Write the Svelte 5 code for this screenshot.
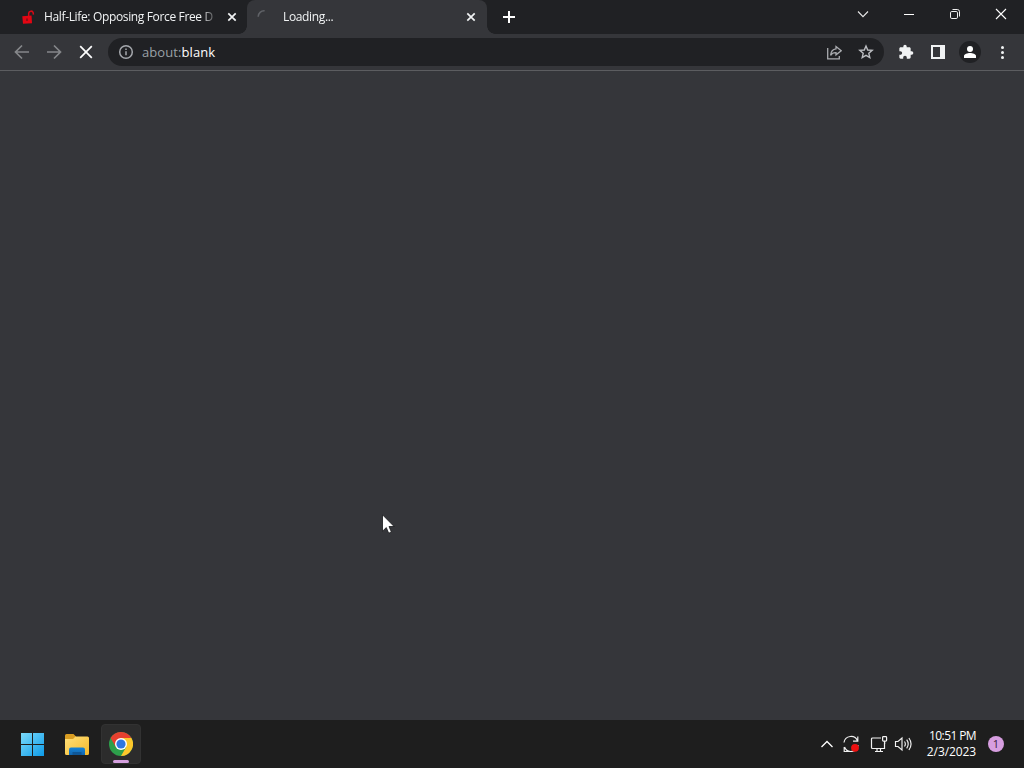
<script>
  let tabs = [
    {id: 1, title: "Half-Life: Opposing Force Free D", active: false},
    {id: 2, title: "Loading...", active: true}
  ];
  let time = "10:51 PM";
  let date = "2/3/2023";
  let notifications = 1;
</script>

<div class="screen">
  <div class="tabstrip">
    {#each tabs as tab}
      <div class="tab" class:active={tab.active}>
        {#if tab.active}
          <svg class="favicon" viewBox="0 0 16 16"><path d="M3.2 8.2A6 6 0 0 1 9.6 2.2" transform="translate(0 -.5)" fill="none" stroke="#606267" stroke-width="1.6"/></svg>
        {:else}
          <svg class="favicon" viewBox="0 0 16 16">
            <path d="M2.3 7.3 11.5 6.4 12 14.2 3 14.8z" fill="#e30613"/>
            <path d="M8.7 7V4.2a2.3 2.3 0 0 1 4.5-.4l.2 1.8" fill="none" stroke="#d50916" stroke-width="1.5"/>
            <path d="M7 9.4v2.7" stroke="#7c1018" stroke-width="1.5"/>
          </svg>
        {/if}
        <span class="title">{tab.title}</span>
        <svg class="close" viewBox="0 0 16 16"><path d="M4.3 4.3l7.4 7.4M11.7 4.3l-7.4 7.4" stroke="#f1f3f4" stroke-width="1.7"/></svg>
      </div>
    {/each}
    <svg class="plus" viewBox="0 0 16 16"><path d="M8 2v12M2 8h12" stroke="#fff" stroke-width="2"/></svg>
    <div class="window-buttons">
      <svg viewBox="0 0 16 16"><path d="M3 5.5 8 10.7 13 5.5" fill="none" stroke="#e8e8e8" stroke-width="1.1"/></svg>
      <svg viewBox="0 0 16 16"><path d="M3 8.5h10" stroke="#fff"/></svg>
      <svg viewBox="0 0 16 16" fill="none" stroke="#f0f0f0"><rect x="3.5" y="5.5" width="7" height="7" rx="1.3"/><path d="M5.5 3.5h4.8a2.2 2.2 0 0 1 2.2 2.2v4.8"/></svg>
      <svg viewBox="0 0 16 16"><path d="M3 3l10 10M13 3 3 13" stroke="#fff" stroke-width="1.1"/></svg>
    </div>
  </div>

  <div class="toolbar">
    <div class="nav">
      <svg viewBox="0 0 16 16" fill="none" stroke="#85878a" stroke-width="1.7"><path d="M15 8H2M8 1.5 1.5 8 8 14.5"/></svg>
      <svg viewBox="0 0 16 16" fill="none" stroke="#85878a" stroke-width="1.7"><path d="M1 8h13M8 1.5 14.5 8 8 14.5"/></svg>
      <svg viewBox="0 0 16 16" stroke="#fff" stroke-width="1.7"><path d="M2.2 2.2l11.6 11.6M13.8 2.2 2.2 13.8"/></svg>
    </div>
    <div class="omnibox">
      <svg viewBox="0 0 16 16" fill="none" stroke="#a5a8ad" stroke-width="1.5"><circle cx="8" cy="8" r="6.3"/><path d="M8 7.2v4M8 4.4v1.5"/></svg>
      <span class="url">about:<b>blank</b></span>
      <svg class="share" viewBox="0 0 16 16" fill="none" stroke="#a9abaf" stroke-width="1.3">
        <path d="M1.7 4v10.8h11.600V12"/>
        <path d="M10 2.600 15.200 6.700 10 10.800V8.600C7.200 8.500 5.700 9.400 4.600 11.300 4.900 7.500 6.900 5.200 10 4.900z"/>
      </svg>
      <svg viewBox="0 0 16 16" fill="none" stroke="#bcbec2" stroke-width="1.4"><path d="M8 2 9.7 6 14.2 6.4 10.8 9.3 11.8 13.6 8 11.3 4.2 13.6 5.2 9.3 1.8 6.4 6.3 6z"/></svg>
    </div>
    <div class="actions">
      <svg viewBox="0 0 24 24" fill="#f1f3f4"><path d="M20.5 11H19V7c0-1.1-.9-2-2-2h-4V3.500a2.500 2.500 0 0 0-5 0V5H4c-1.100 0-1.990.9-1.990 2v3.800H3.500c1.490 0 2.700 1.210 2.700 2.700s-1.210 2.700-2.700 2.700H2V20c0 1.100.9 2 2 2h3.800v-1.500c0-1.490 1.210-2.700 2.700-2.700s2.700 1.210 2.700 2.700V22H17c1.100 0 2-.9 2-2v-4h1.500a2.500 2.500 0 0 0 0-5z"/></svg>
      <svg viewBox="0 0 16 16"><path d="M1 1h14v14H1zM3 3v10h7V3z" fill="#f1f3f4" fill-rule="evenodd"/></svg>
      <span class="avatar"><svg viewBox="0 0 16 16" fill="#fff"><circle cx="8" cy="5" r="3"/><path d="M2 14v-2c0-2 3.500-3 6-3s6 1 6 3v2z"/></svg></span>
      <svg viewBox="0 0 16 16" fill="#f1f3f4"><circle cx="8.500" cy="3.500" r="1.500"/><circle cx="8.500" cy="8.500" r="1.500"/><circle cx="8.500" cy="13.500" r="1.500"/></svg>
    </div>
  </div>

  <div class="page"></div>

  <div class="taskbar">
    <div class="apps">
      <div class="app">
        <svg viewBox="0 0 24 24">
          <defs><linearGradient id="win" x1="0" y1="0" x2="24" y2="24" gradientUnits="userSpaceOnUse"><stop offset="0" stop-color="#7edcfb"/><stop offset="1" stop-color="#0a99e8"/></linearGradient></defs>
          <path d="M0 1h11v11H0zM12 1h11v11H12zM0 13h11v11H0zM12 13h11v11H12z" fill="url(#win)"/>
        </svg>
      </div>
      <div class="app">
        <svg class="folder" viewBox="0 0 26 24">
          <defs>
            <linearGradient id="fold" x1="0" y1="0" x2="1" y2="1"><stop offset="0" stop-color="#ffe07a"/><stop offset="1" stop-color="#f6b92b"/></linearGradient>
            <linearGradient id="tray" x1="0" y1="0" x2="0" y2="1"><stop offset="0" stop-color="#1583d8"/><stop offset="1" stop-color="#1266ae"/></linearGradient>
          </defs>
          <path d="M1 3.500A1.500 1.500 0 0 1 2.500 2h7L12 4.500v4H1z" fill="#d99d22"/>
          <path d="M1 7h8l2.500-2.500H23.500A1.500 1.500 0 0 1 25 6v15.500a1.500 1.500 0 0 1-1.500 1.500H2.500A1.500 1.500 0 0 1 1 21.500z" fill="url(#fold)"/>
          <path d="M5 23v-5.500a2 2 0 0 1 2-2h12a2 2 0 0 1 2 2V23z" fill="url(#tray)"/>
          <path d="M8.500 20h9v3h-9z" fill="#0f5797"/>
        </svg>
      </div>
      <div class="app current">
        <svg viewBox="0 0 24 24">
          <circle cx="12" cy="12" r="12" fill="#2d9f4b"/>
          <path d="M12 12 1.600 6A12 12 0 0 1 22.400 6z" fill="#e6402f"/>
          <path d="M12 6h10.400A12 12 0 0 1 12 24L17.200 15z" fill="#fcc72b"/>
          <path d="M1.600 6 6.800 15 12 12V6z" fill="#e6402f"/>
          <circle cx="12" cy="12" r="6" fill="#fff"/>
          <circle cx="12" cy="12" r="4.600" fill="#2f76e0"/>
        </svg>
        <span class="indicator"></span>
      </div>
    </div>
    <div class="tray">
      <svg class="up" viewBox="0 0 16 16"><path d="M2.500 11 8 5.500 13.500 11" fill="none" stroke="#fff" stroke-width="1.300"/></svg>
      <svg class="update" viewBox="0 0 18 18" fill="none" stroke="#eee" stroke-width="1.200">
        <path d="M2 7.500A7 7 0 0 1 15.500 6M15.800 1.500V6.200H11M16 10A7 7 0 0 1 2.500 12M6.500 16.500H2.200V12"/>
        <circle cx="13" cy="12.800" r="3.900" fill="#ee1010" stroke="none"/>
      </svg>
      <svg class="network" viewBox="0 0 18 18" fill="none" stroke="#f2f2f2" stroke-width="1.200">
        <path d="M11 3H2.500a1 1 0 0 0-1 1v8.500a1 1 0 0 0 1 1h12v-6M5 16.500h8M7 13.500v3M10.500 13.500v3"/>
        <rect x="12.600" y="1.600" width="4" height="4.500" rx=".8"/><path d="M14.600 6v3"/>
      </svg>
      <svg class="sound" viewBox="0 0 18 18" fill="none" stroke="#f2f2f2" stroke-width="1.150">
        <path d="M1.500 6.500H4L8 3v12l-4-3.500H1.500zM10.500 6.500q1.700 2.500 0 5M12.700 4.700q3 4.300 0 8.600M14.900 3q4.300 6 0 12"/>
      </svg>
      <div class="clock">
        <div class="time">{time}</div>
        <div class="date">{date}</div>
      </div>
      <span class="badge">{notifications}</span>
    </div>
  </div>

  <svg class="cursor" viewBox="0 0 13 20"><path d="M.5.8v16.400l3.800-3.600 2.400 5.600 2.700-1.200L7 12.500h5.100z" fill="#fff" stroke="#17181a" stroke-width=".8"/></svg>
</div>

<style>
  :global(body) {
    background: #35363a;
    overflow: hidden;
  }

  svg {
    display: block;
    flex: none;
    height: 16px;
    width: 16px;
  }

  .screen {
    background: #35363a;
    color: #fff;
    display: flex;
    flex-direction: column;
    font-family: "Open Sans", "Noto Sans", sans-serif;
    font-size: 12px;
    height: 768px;
    position: relative;
    width: 1024px;
  }

  .tabstrip {
    background: #202124;
    display: flex;
    height: 34px;
  }

  .tab {
    align-items: center;
    box-sizing: border-box;
    display: flex;
    height: 34px;
    padding: 0 7px 0 20px;
    width: 247px;
  }

  .tab.active {
    background: #35363a;
    border-radius: 8px 8px 0 0;
    padding: 0 8px;
    position: relative;
    width: 240px;
  }

  /* curved feet of the selected tab */
  .tab.active::before,
  .tab.active::after {
    bottom: 0;
    content: "";
    height: 8px;
    position: absolute;
    width: 8px;
  }

  .tab.active::before {
    background: radial-gradient(circle at 0 0, transparent 7.5px, #35363a 8px);
    left: -8px;
  }

  .tab.active::after {
    background: radial-gradient(circle at 100% 0, transparent 7.5px, #35363a 8px);
    right: -8px;
  }

  .title {
    color: #f1f3f4;
    flex: 1;
    font-weight: 500;
    letter-spacing: -0.35px;
    line-height: 18px;
    margin-left: 8px;
    margin-right: 6px;
    -webkit-mask-image: linear-gradient(to right, #000 90%, transparent);
    mask-image: linear-gradient(to right, #000 90%, transparent);
    white-space: nowrap;
  }

  .active .title {
    margin-left: 12px;
  }

  .plus {
    margin: 9px 0 0 14px;
  }

  .window-buttons {
    display: flex;
    gap: 30px;
    margin: 6px 15px 0 auto;
  }

  .toolbar {
    align-items: center;
    border-bottom: 1px solid #5c5d60;
    box-sizing: border-box;
    display: flex;
    height: 37px;
    padding: 0 14px;
  }

  .nav {
    display: flex;
    gap: 16px;
    margin-right: 14px;
  }

  .omnibox {
    align-items: center;
    background: #202124;
    border-radius: 14px;
    box-sizing: border-box;
    display: flex;
    height: 28px;
    padding: 0 10px;
    width: 776px;
  }

  .url {
    color: #9aa0a6;
    flex: 1;
    font-size: 13px;
    letter-spacing: 0.08px;
    margin-left: 8px;
  }

  .url b {
    color: #fff;
    font-weight: 400;
  }

  .share {
    margin-right: 16px;
  }

  .actions {
    align-items: center;
    display: flex;
    gap: 16px;
    margin-left: 14px;
  }

  .avatar {
    background: #202124;
    border-radius: 50%;
    margin: 0 -3px;
    padding: 3px;
  }

  .page {
    flex: 1;
  }

  .taskbar {
    align-items: center;
    background: #1e1e1e;
    display: flex;
    height: 48px;
    justify-content: space-between;
  }

  .apps {
    display: flex;
    gap: 4px;
    margin-left: 13px;
  }

  .app {
    align-items: center;
    border-radius: 4px;
    box-sizing: border-box;
    display: flex;
    height: 40px;
    justify-content: center;
    position: relative;
    width: 40px;
  }

  .app svg {
    height: 24px;
    width: 24px;
  }

  .app .folder {
    width: 26px;
  }

  .current {
    background: #2c2c2c;
    border: 1px solid #323232;
  }

  .indicator {
    background: #d5a0df;
    border-radius: 2px;
    bottom: 0;
    height: 3px;
    left: 11px;
    position: absolute;
    width: 16px;
  }

  .tray {
    align-items: center;
    display: flex;
    margin-right: 20px;
  }

  .update,
  .network,
  .sound {
    height: 18px;
    width: 18px;
  }

  .update {
    margin-left: 7px;
  }

  .network {
    margin-left: 10px;
  }

  .sound {
    margin-left: 6px;
  }

  .clock {
    line-height: 16px;
    margin-left: 14px;
    text-align: right;
    width: 50px;
    white-space: nowrap;
  }

  .clock .time {
    letter-spacing: -0.6px;
  }

  .clock .date {
    letter-spacing: -0.1px;
  }

  .badge {
    background: #d79ee0;
    border-radius: 50%;
    color: #38203d;
    font-size: 11px;
    height: 16px;
    line-height: 16px;
    margin-left: 12px;
    text-align: center;
    width: 16px;
  }

  .cursor {
    height: 20px;
    left: 382px;
    position: absolute;
    top: 514px;
    width: 13px;
  }
</style>
